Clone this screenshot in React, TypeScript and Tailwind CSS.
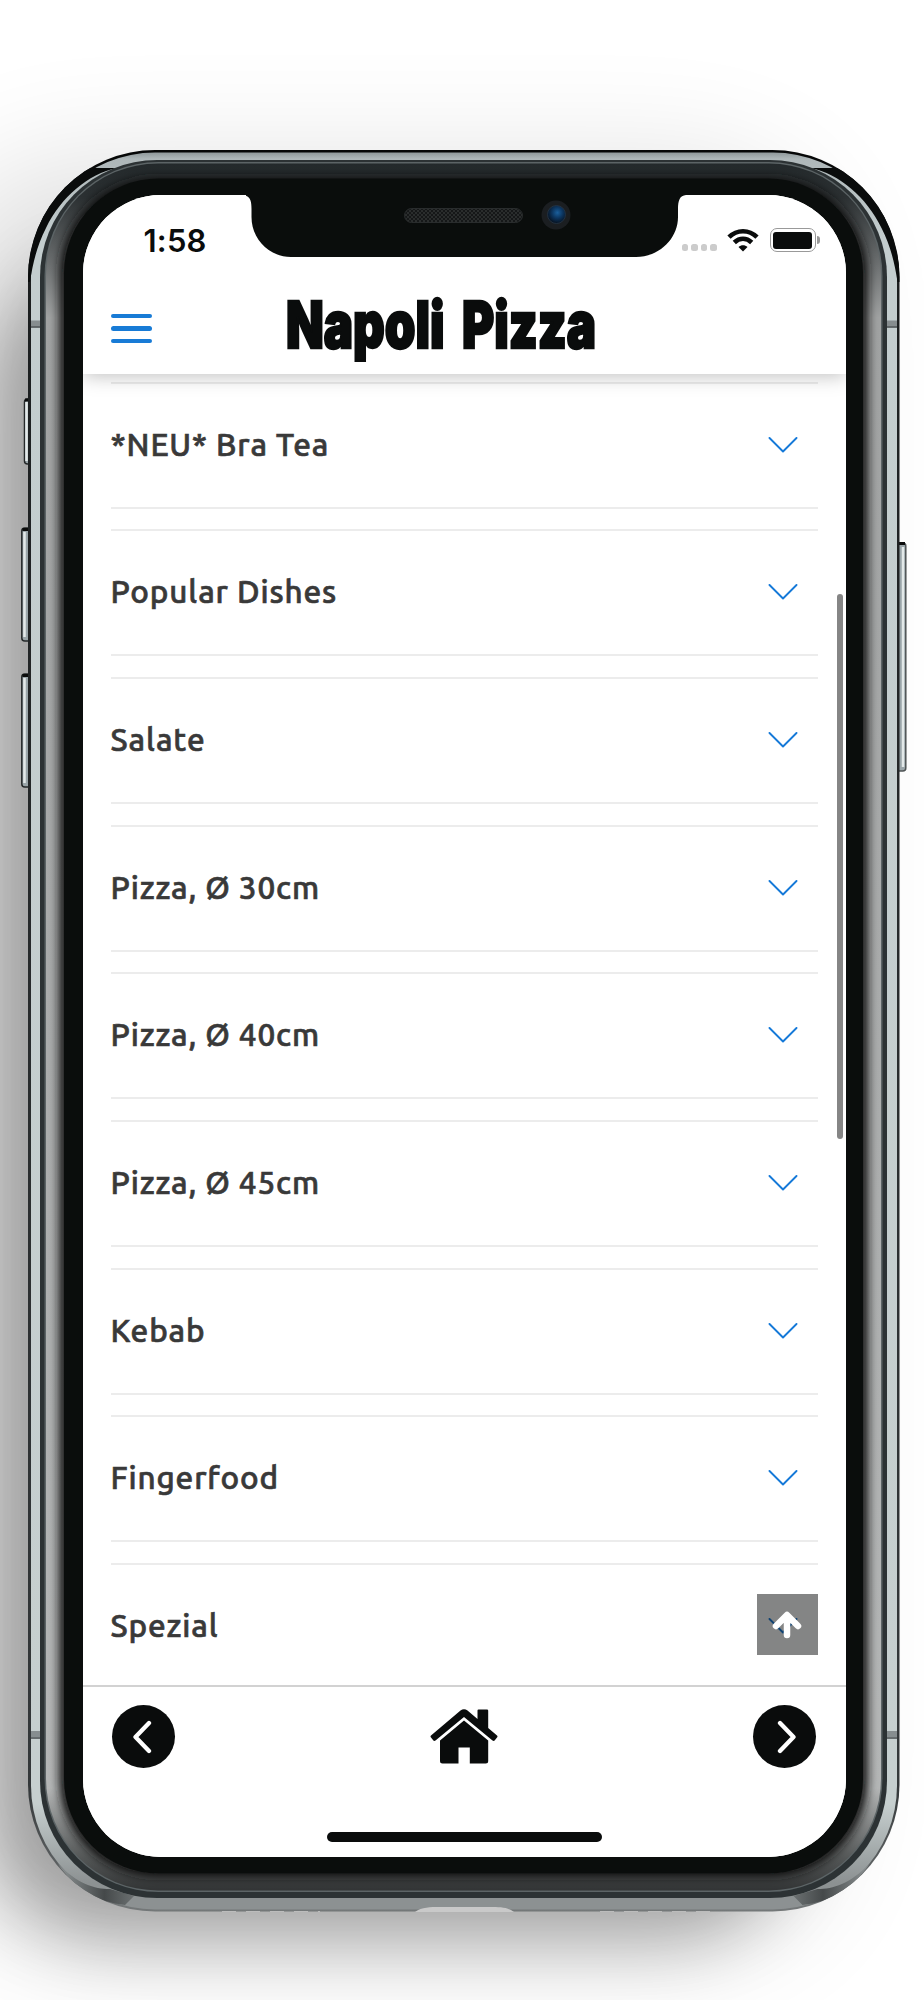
import { useState } from 'react';

const CATEGORIES = [
  '*NEU* Bra Tea',
  'Popular Dishes',
  'Salate',
  'Pizza, Ø 30cm',
  'Pizza, Ø 40cm',
  'Pizza, Ø 45cm',
  'Kebab',
  'Fingerfood',
  'Spezial',
];

function CornerShade() {
  return (
    <>
      <path d="M26 282C31 225 54 188 84 168L60 160L90 155L102 157L90 168L117 168C88 174 61 197 46 228C37 246 33 262 30 282Z" fill="#0a0c0c" />
      <path d="M58 1864C78 1884 94 1889 110 1889L134 1896L125 1905C98 1902 76 1890 58 1864Z" fill="url(#cornerFade)" />
    </>
  );
}

function DeviceFrame() {
  return (
    <svg className="pointer-events-none absolute inset-0" width="924" height="2000" viewBox="0 0 924 2000" fill="none" aria-hidden="true">
      <defs>
        <clipPath id="body">
          <rect x="28" y="150" width="871.500" height="1761.500" rx="127" />
        </clipPath>
        <linearGradient id="edge" x1="0" y1="150" x2="0" y2="1911" gradientUnits="userSpaceOnUse">
          <stop offset="0" stopColor="#050606" />
          <stop offset="0.07" stopColor="#1b1e1f" />
          <stop offset="0.93" stopColor="#34383a" />
          <stop offset="1" stopColor="#747879" />
        </linearGradient>
        <linearGradient id="steel" x1="0" y1="152" x2="0" y2="1909" gradientUnits="userSpaceOnUse">
          <stop offset="0" stopColor="#8d9698" />
          <stop offset="0.004" stopColor="#aeb7b9" />
          <stop offset="0.05" stopColor="#c3cdce" />
          <stop offset="0.94" stopColor="#c6cfcf" />
          <stop offset="0.985" stopColor="#8c9192" />
          <stop offset="1" stopColor="#8c9192" />
        </linearGradient>
        <linearGradient id="sheen" x1="0" y1="162" x2="0" y2="1892" gradientUnits="userSpaceOnUse">
          <stop offset="0" stopColor="#23292b" />
          <stop offset="0.02" stopColor="#2b3032" />
          <stop offset="0.09" stopColor="#a0a2a2" />
          <stop offset="0.94" stopColor="#b4b6b6" />
          <stop offset="0.98" stopColor="#555858" />
          <stop offset="1" stopColor="#303233" />
        </linearGradient>
        <linearGradient id="cornerFade" x1="60" y1="0" x2="134" y2="0" gradientUnits="userSpaceOnUse">
          <stop offset="0" stopColor="#8b9192" />
          <stop offset="0.6" stopColor="#45494a" />
          <stop offset="1" stopColor="#6b7071" />
        </linearGradient>
        <radialGradient id="lens" cx="0.55" cy="0.4" r="0.6">
          <stop offset="0" stopColor="#1a5f9c" />
          <stop offset="0.5" stopColor="#0c355f" />
          <stop offset="1" stopColor="#06111f" />
        </radialGradient>
        <pattern id="mesh" width="4" height="4" patternUnits="userSpaceOnUse">
          <rect width="4" height="4" fill="#151718" />
          <path d="M0 0L4 4M4 0L0 4" stroke="#333637" strokeWidth="0.7" />
        </pattern>
        <filter id="soft" x="-20%" y="-20%" width="140%" height="140%">
          <feGaussianBlur stdDeviation="5" />
        </filter>
        <filter id="shadowFar" x="-600" y="-300" width="2000" height="2700" filterUnits="userSpaceOnUse">
          <feGaussianBlur stdDeviation="62" />
        </filter>
        <filter id="shadowNear" x="-400" y="-200" width="1700" height="2500" filterUnits="userSpaceOnUse">
          <feGaussianBlur stdDeviation="36" />
        </filter>
      </defs>

      <rect x="-60" y="165" width="880" height="1775" rx="130" fill="#000" opacity="0.13" filter="url(#shadowFar)" />
      <rect x="-10" y="270" width="800" height="1670" rx="120" fill="#000" opacity="0.29" filter="url(#shadowNear)" />

      {/* side buttons */}
      <g stroke="#25292a" strokeWidth="1.5" fill="#9aa5a9">
        <rect x="24.5" y="399" width="12" height="65" rx="3" />
        <rect x="21.8" y="528" width="15" height="113" rx="3" />
        <rect x="21.8" y="674" width="15" height="113" rx="3" />
        <rect x="890" y="543" width="15.8" height="228" rx="3" stroke="#4f5455" />
      </g>
      <path d="M26.500 402V461M24.500 532V637M24.500 678V783M903 547V767" stroke="#e3e9e9" strokeWidth="2.500" />
      <path d="M25 400H30M22.500 529.500H30M22.500 675.500H30M898 543.500H905" stroke="#0b0c0c" strokeWidth="3" />

      <rect x="28" y="150" width="871.500" height="1761.500" rx="127" fill="url(#edge)" />
      <rect x="31" y="152.500" width="866" height="1757" rx="124" fill="url(#steel)" />
      <path d="M31 323.500H41M887 323.500H897M31 1734H41M887 1734H897" stroke="#868d8f" strokeWidth="6" />
      <path d="M31 327H41M887 327H897M31 1738H41M887 1738H897" stroke="#454b4d" strokeWidth="1.500" />
      <g clipPath="url(#body)">
        <CornerShade />
        <g transform="matrix(-1 0 0 1 927.500 0)">
          <CornerShade />
        </g>
      </g>
      <rect x="40" y="160" width="847" height="1738" rx="117" fill="#2c3234" />
      <rect x="44.500" y="162" width="838" height="1730" rx="114" fill="#5c6466" />
      <rect x="46" y="163.500" width="835" height="1727" rx="112" fill="url(#sheen)" />
      <rect x="59" y="177" width="809" height="1700" rx="98" fill="#141616" filter="url(#soft)" />
      <rect x="64" y="178.500" width="799" height="1695" rx="95" fill="#0a0d0c" />

      {/* bottom of the case */}
      <path d="M222 1911.500H320M600 1911.500H710" stroke="#bcbcbc" strokeWidth="1" strokeDasharray="14 10" />
      <path d="M415 1912C422 1907 430 1907 440 1907H490C500 1907 507 1907 514 1912Z" fill="#c9c9c9" />
    </svg>
  );
}

function Notch() {
  return (
    <svg className="absolute left-[163px] top-0 z-20" width="440" height="63" viewBox="0 0 440 63" aria-hidden="true">
      <path d="M-3 0C4 1 5.500 5 5.500 14V22C5.500 44 23 62 45 62H390C413 62 432 44 432 22V14C432 5 434 0 441 0Z" fill="#0a0d0c" />
      <rect x="158.500" y="13.500" width="118" height="14" rx="7" fill="url(#mesh)" stroke="#292c2d" />
      <circle cx="310" cy="20" r="14.500" fill="#1b1e21" />
      <circle cx="310.500" cy="19.500" r="9" fill="url(#lens)" stroke="#263647" strokeWidth="0.8" />
    </svg>
  );
}

function StatusBar() {
  return (
    <div className="relative z-20 flex h-[90px] shrink-0 items-start justify-between bg-white pl-[61px] pr-[26px] pt-[28px]">
      <span className="font-['Inter'] text-[31px] font-semibold leading-[35px] tracking-[0.2px]">1:58</span>
      <div className="flex h-[34px] items-center">
        <div className="mr-[10px] mt-[15px] flex gap-[3px]">
          {[0, 1, 2, 3].map((dot) => (
            <span key={dot} className="size-[6.500px] rounded-[2.500px] bg-[#cccccc]" />
          ))}
        </div>
        <svg className="mr-[11px]" width="32" height="24" viewBox="0 0 32 24" fill="none" stroke="#0a0c0c" strokeWidth="4.600">
          <path d="M2 9.200C10 1.200 22 1.200 30 9.200" />
          <path d="M7.300 14.500C12.500 9.500 19.500 9.500 24.700 14.500" />
          <path d="M16 23.500L11.500 19C14 16.800 18 16.800 20.500 19Z" fill="#0a0c0c" stroke="none" />
        </svg>
        <div className="flex h-[24px] w-[46px] rounded-[7px] border-[1.500px] border-[#999999] p-[2.500px]">
          <div className="flex-1 rounded-[3px] bg-[#0a0c0c]" />
        </div>
        <div className="ml-[1.500px] h-[8px] w-[3px] rounded-r-full bg-[#999999]" />
      </div>
    </div>
  );
}

function Header() {
  return (
    <header className="relative z-10 flex h-[89px] shrink-0 items-start bg-white pl-[28px] shadow-[0_2px_18px_rgba(0,0,0,0.25)]">
      <button type="button" aria-label="Menu" className="mt-[29px] flex w-[41px] flex-col gap-[8px]">
        <span className="h-[4.300px] rounded-full bg-[#187bd6]" />
        <span className="h-[4.300px] rounded-full bg-[#187bd6]" />
        <span className="h-[4.300px] rounded-full bg-[#187bd6]" />
      </button>
      <svg className="ml-[134px] mt-[4px] overflow-visible" width="312" height="80" viewBox="0 0 312 80">
        <text x="0" y="58.500" textLength="310" lengthAdjust="spacingAndGlyphs" fontFamily="Impact, Inter, sans-serif" fontWeight="900" fontSize="65" wordSpacing="10" fill="#0a0c0c" stroke="#0a0c0c" strokeWidth="2.500">
          Napoli Pizza
        </text>
      </svg>
    </header>
  );
}

function Chevron() {
  return (
    <svg width="30" height="16" viewBox="0 0 30 16" fill="none" stroke="#1579d8" strokeWidth="1.900" strokeLinecap="round" strokeLinejoin="round">
      <path d="M1.500 1L15 14.500L28.500 1" />
    </svg>
  );
}

function CategoryRow({ label }: { label: string }) {
  const [open, setOpen] = useState(false);

  return (
    <button
      type="button"
      onClick={() => setOpen((v) => !v)}
      aria-expanded={open}
      className="mb-[20.700px] flex h-[127px] w-full shrink-0 items-center justify-between border-y-2 border-[#ececec] pb-[1px] pr-[20px] text-left"
    >
      <span className="font-['Ubuntu','Noto_Sans',sans-serif] text-[31.500px] font-medium leading-[40px] tracking-[0.85px] text-[#393939] [-webkit-text-stroke:0.65px_#393939]">
        {label}
      </span>
      <Chevron />
    </button>
  );
}

function BottomBar() {
  return (
    <nav className="relative flex h-[172px] shrink-0 items-start justify-between border-t-2 border-[#d2d2d2] bg-white pl-[29.500px] pr-[30px] pt-[18px]">
      <button type="button" aria-label="Back" className="flex size-[63px] items-center justify-center rounded-full bg-[#0a0c0c]">
        <svg className="-ml-1" width="20" height="34" viewBox="0 0 20 34" fill="none" stroke="white" strokeWidth="4.300" strokeLinecap="round" strokeLinejoin="round">
          <path d="M17 3L3.500 17L17 31" />
        </svg>
      </button>
      <button type="button" aria-label="Home" className="mt-[4px]">
        <svg width="68" height="56" viewBox="0 0 68 56" fill="#0a0c0c">
          <path d="M1 26.500L30.500 1.500Q34 -1 37.500 1.500L47.500 10V1.500Q47.500 0.500 48.500 0.500H57Q58.200 0.500 58.200 1.500V19L67 26.500Q68 27.500 67 28.500L65 31Q64 32.500 62.500 31.500L34 8L5.500 31.500Q4 32.500 3 31L1 28.500Q0 27.500 1 26.500Z" />
          <path d="M34 11.500L58.200 31.500V52Q58.200 54.500 55.700 54.500H39.800V38.500H28.500V54.500H12.500Q10 54.500 10 52V31.500Z" />
        </svg>
      </button>
      <button type="button" aria-label="Forward" className="flex size-[63px] items-center justify-center rounded-full bg-[#0a0c0c]">
        <svg className="ml-1" width="20" height="34" viewBox="0 0 20 34" fill="none" stroke="white" strokeWidth="4.300" strokeLinecap="round" strokeLinejoin="round">
          <path d="M3 3L16.500 17L3 31" />
        </svg>
      </button>
      <div className="absolute bottom-[15px] left-[244.500px] h-[10px] w-[275px] rounded-full bg-[#0a0c0c]" />
    </nav>
  );
}

export default function App() {
  return (
    <div className="relative h-[2000px] w-[924px] overflow-hidden bg-white pl-[82.500px] pt-[195px]">
      <DeviceFrame />
      <main className="relative flex h-[1662px] w-[763.500px] flex-col overflow-hidden rounded-[78px] bg-white text-[#0a0c0c]">
        <StatusBar />
        <Notch />
        <Header />
        <section className="relative flex min-h-0 flex-1 flex-col overflow-hidden px-[28px] pt-[7.500px]">
          {CATEGORIES.map((label) => (
            <CategoryRow key={label} label={label} />
          ))}
          <div className="absolute right-[3.500px] top-[220px] h-[545px] w-[6px] rounded-full bg-[#858585]" />
          <button
            type="button"
            aria-label="Scroll to top"
            className="absolute bottom-[30px] right-[28px] flex size-[61.500px] items-center justify-center bg-[#0a0c0c]/50"
          >
            <svg width="30" height="30" viewBox="0 0 30 30" fill="none" stroke="white" strokeWidth="6.500" strokeLinecap="round" strokeLinejoin="round">
              <path d="M15 26V7M4 17L15 6L26 17" />
            </svg>
          </button>
        </section>
        <BottomBar />
      </main>
    </div>
  );
}
